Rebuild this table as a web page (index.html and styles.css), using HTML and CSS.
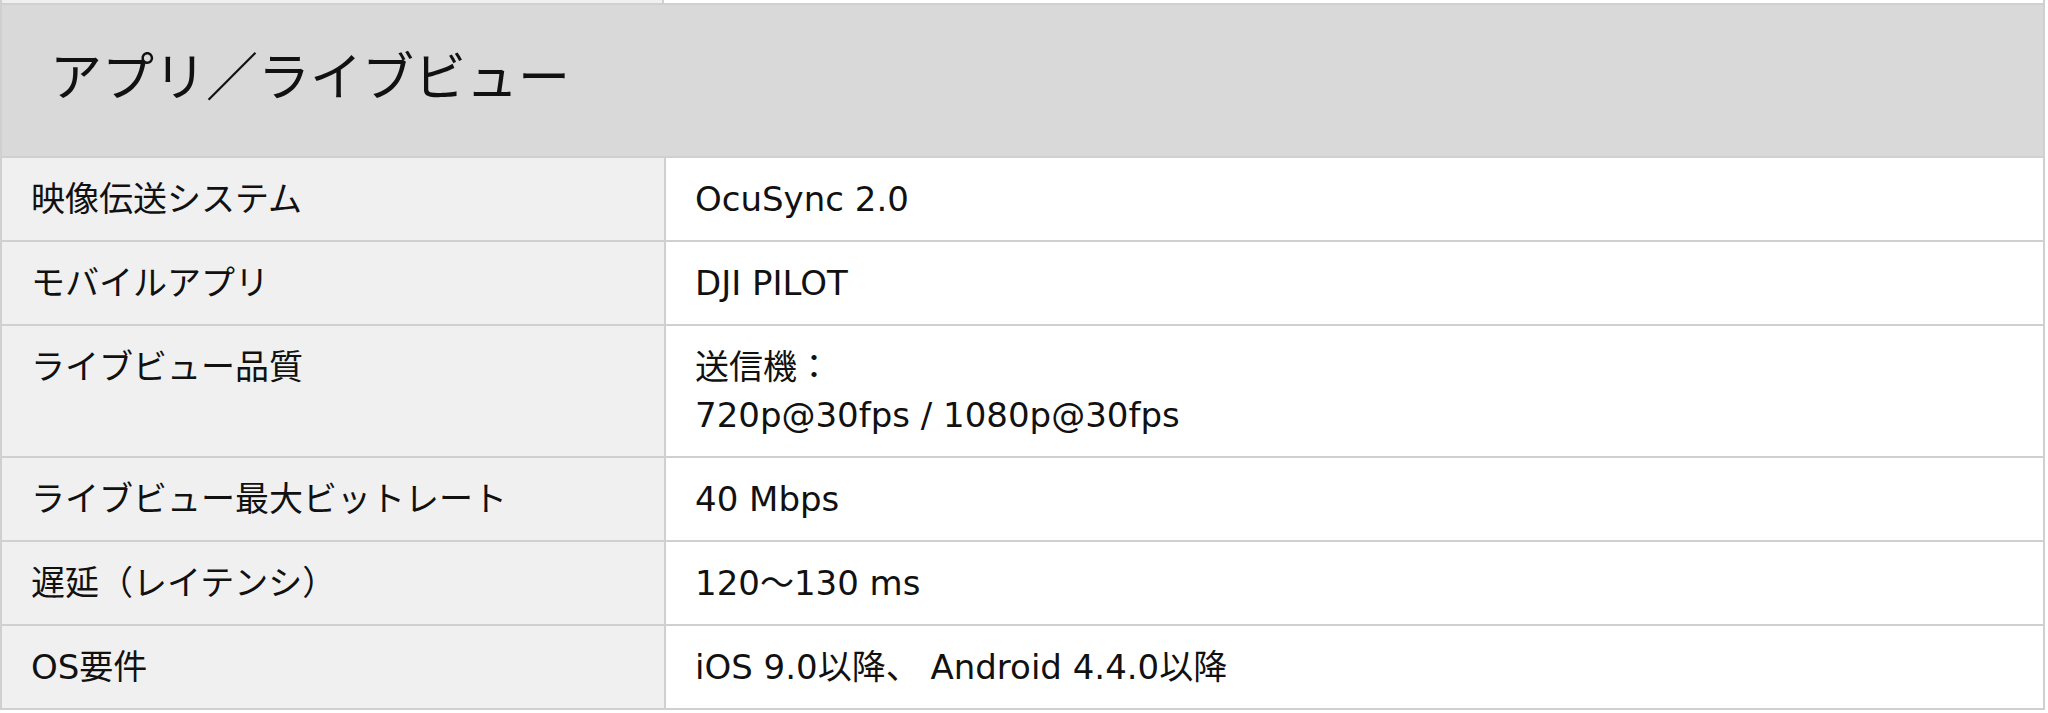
FILE: index.html
```html
<!DOCTYPE html>
<html lang="ja">
<head>
<meta charset="utf-8">
<title>アプリ／ライブビュー</title>
<link rel="stylesheet" href="styles.css">
</head>
<body>
<div class="wrap">
  <div class="prev"><div class="prev-l"></div><div class="prev-r"></div></div>
  <table class="spec">
    <colgroup><col class="col-label"><col class="col-value"></colgroup>
    <thead>
      <tr><th class="section" colspan="2">アプリ／ライブビュー</th></tr>
    </thead>
    <tbody>
      <tr><td class="label">映像伝送システム</td><td class="value">OcuSync 2.0</td></tr>
      <tr><td class="label">モバイルアプリ</td><td class="value">DJI PILOT</td></tr>
      <tr><td class="label">ライブビュー品質</td><td class="value">送信機：<br>720p@30fps / 1080p@30fps</td></tr>
      <tr><td class="label">ライブビュー最大ビットレート</td><td class="value">40 Mbps</td></tr>
      <tr><td class="label">遅延（レイテンシ）</td><td class="value">120～130 ms</td></tr>
      <tr><td class="label">OS要件</td><td class="value">iOS 9.0以降、 Android 4.4.0以降</td></tr>
    </tbody>
  </table>
</div>
</body>
</html>
```
FILE: styles.css
```css
html, body {
  margin: 0;
  padding: 0;
  background: #ffffff;
}
body {
  font-family: "DejaVu Sans", "Noto Sans CJK JP", sans-serif;
  color: #111111;
}
.wrap {
  width: 2045px;
}
.prev {
  display: grid;
  grid-template-columns: 664px 1fr;
  height: 3px;
}
.prev-l {
  background: #f0f0f0;
  border-left: 2px solid #d0d0d0;
  border-right: 2px solid #d0d0d0;
}
.prev-r {
  background: #ffffff;
  border-right: 2px solid #d0d0d0;
}
.spec {
  width: 2045px;
  border-collapse: collapse;
  table-layout: fixed;
}
.col-label {
  width: 664px;
}
.spec th,
.spec td {
  border: 2px solid #d0d0d0;
}
.section {
  background: #d9d9d9;
  height: 137px;
  padding: 0 0 14px 48px;
  text-align: left;
  font-family: "Noto Sans CJK JP", sans-serif;
  font-weight: 400;
  font-size: 52px;
  line-height: 60px;
  color: #111111;
}
.spec td {
  font-size: 34px;
  line-height: 48px;
  padding: 17px 29px;
  vertical-align: top;
  text-align: left;
}
.label {
  background: #f0f0f0;
}
.value {
  background: #ffffff;
}
```
